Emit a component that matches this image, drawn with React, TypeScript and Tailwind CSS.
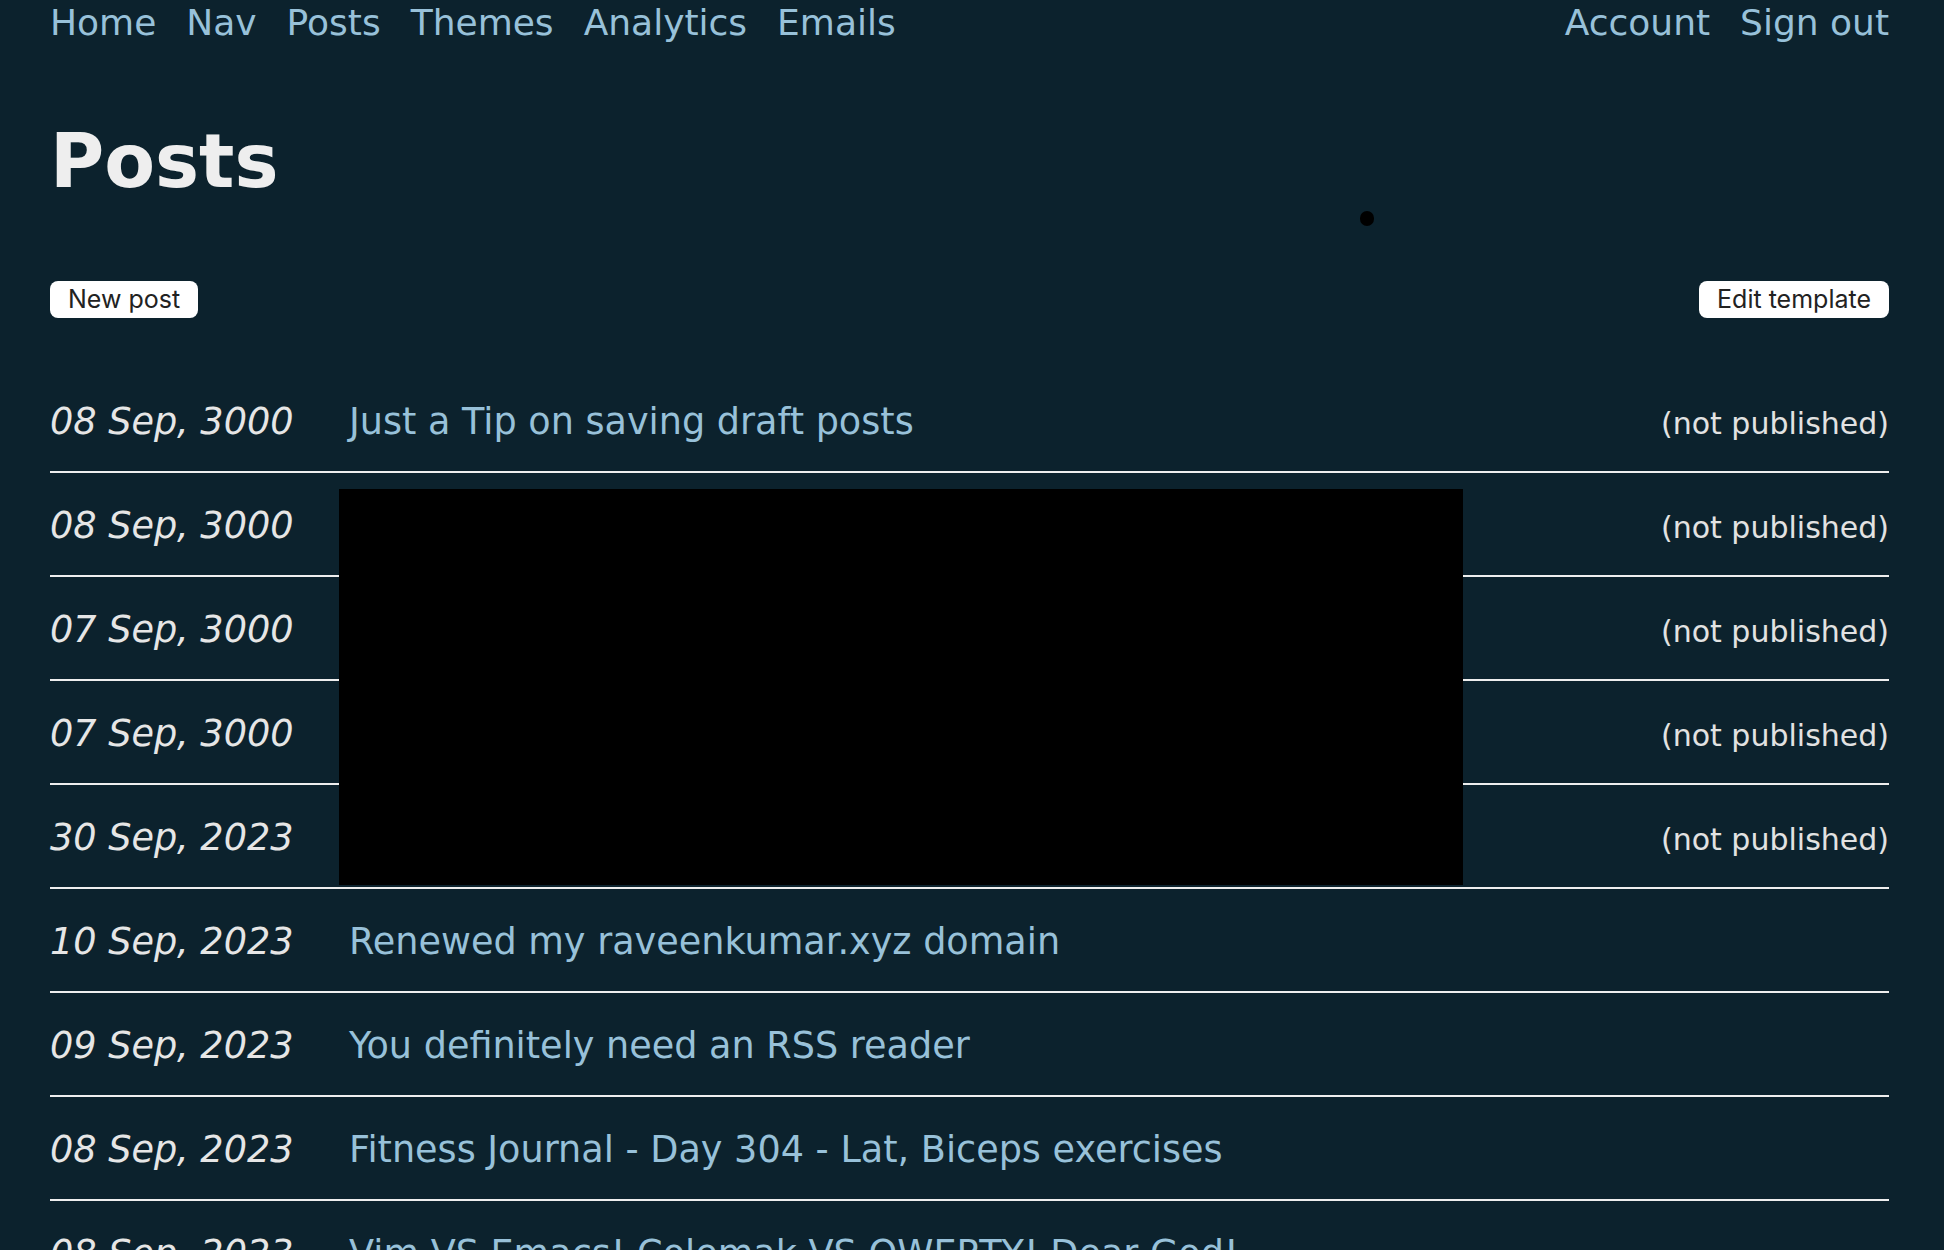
import React from "react";

type Row = { date: string; title: string; draft?: boolean };

const rows: Row[] = [
  { date: "08 Sep, 3000", title: "Just a Tip on saving draft posts", draft: true },
  { date: "08 Sep, 3000", title: "Draft post", draft: true },
  { date: "07 Sep, 3000", title: "Draft post", draft: true },
  { date: "07 Sep, 3000", title: "Draft post", draft: true },
  { date: "30 Sep, 2023", title: "Draft post", draft: true },
  { date: "10 Sep, 2023", title: "Renewed my raveenkumar.xyz domain" },
  { date: "09 Sep, 2023", title: "You definitely need an RSS reader" },
  { date: "08 Sep, 2023", title: "Fitness Journal - Day 304 - Lat, Biceps exercises" },
  { date: "08 Sep, 2023", title: "Vim VS Emacs! Colemak VS QWERTY! Dear God!" },
  { date: "07 Sep, 2023", title: "Fitness Journal - Day 303" },
];

export default function App() {
  return (
    <div className="relative h-[1250px] overflow-hidden bg-[#0c222d] pl-[50px] pr-[55px] font-['DejaVu_Sans',sans-serif]">
      <nav className="flex justify-between pt-[2px] text-[36px] leading-[42px] text-[#98c1d9]">
        <div className="flex gap-[30px]">
          <a>Home</a>
          <a>Nav</a>
          <a>Posts</a>
          <a>Themes</a>
          <a>Analytics</a>
          <a>Emails</a>
        </div>
        <div className="flex gap-[30px]">
          <a>Account</a>
          <a>Sign out</a>
        </div>
      </nav>

      <h1 className="mt-[74px] text-[74px] font-bold leading-[87px] text-[#eeeeee]">Posts</h1>

      <div className="mt-[76px] flex justify-between">
        <button className="flex h-[37px] items-center rounded-[8px] bg-white px-[18px] font-['Inter',sans-serif] text-[25px] text-[#222222]">
          New post
        </button>
        <button className="flex h-[37px] items-center rounded-[8px] bg-white px-[18px] font-['Inter',sans-serif] text-[25px] text-[#222222]">
          Edit template
        </button>
      </div>

      <ul className="mt-[51px]">
        {rows.map((r, i) => (
          <li
            key={i}
            className="flex h-[104px] items-baseline border-b-2 border-[#eeeeee] pt-[32px] text-[36.6px] leading-[42px]"
          >
            <span className="w-[299px] shrink-0 italic text-[#e6e6e6]">{r.date}</span>
            <a className="flex-1 text-[#98c1d9]">{r.title}</a>
            {r.draft && <span className="text-[30px] text-[#e2e2e2]">(not published)</span>}
          </li>
        ))}
      </ul>

      <div className="absolute left-[1360px] top-[211px] h-[15px] w-[14px] rounded-full bg-black" />
      <div className="absolute left-[339px] top-[489px] h-[396px] w-[1124px] bg-black" />
    </div>
  );
}
